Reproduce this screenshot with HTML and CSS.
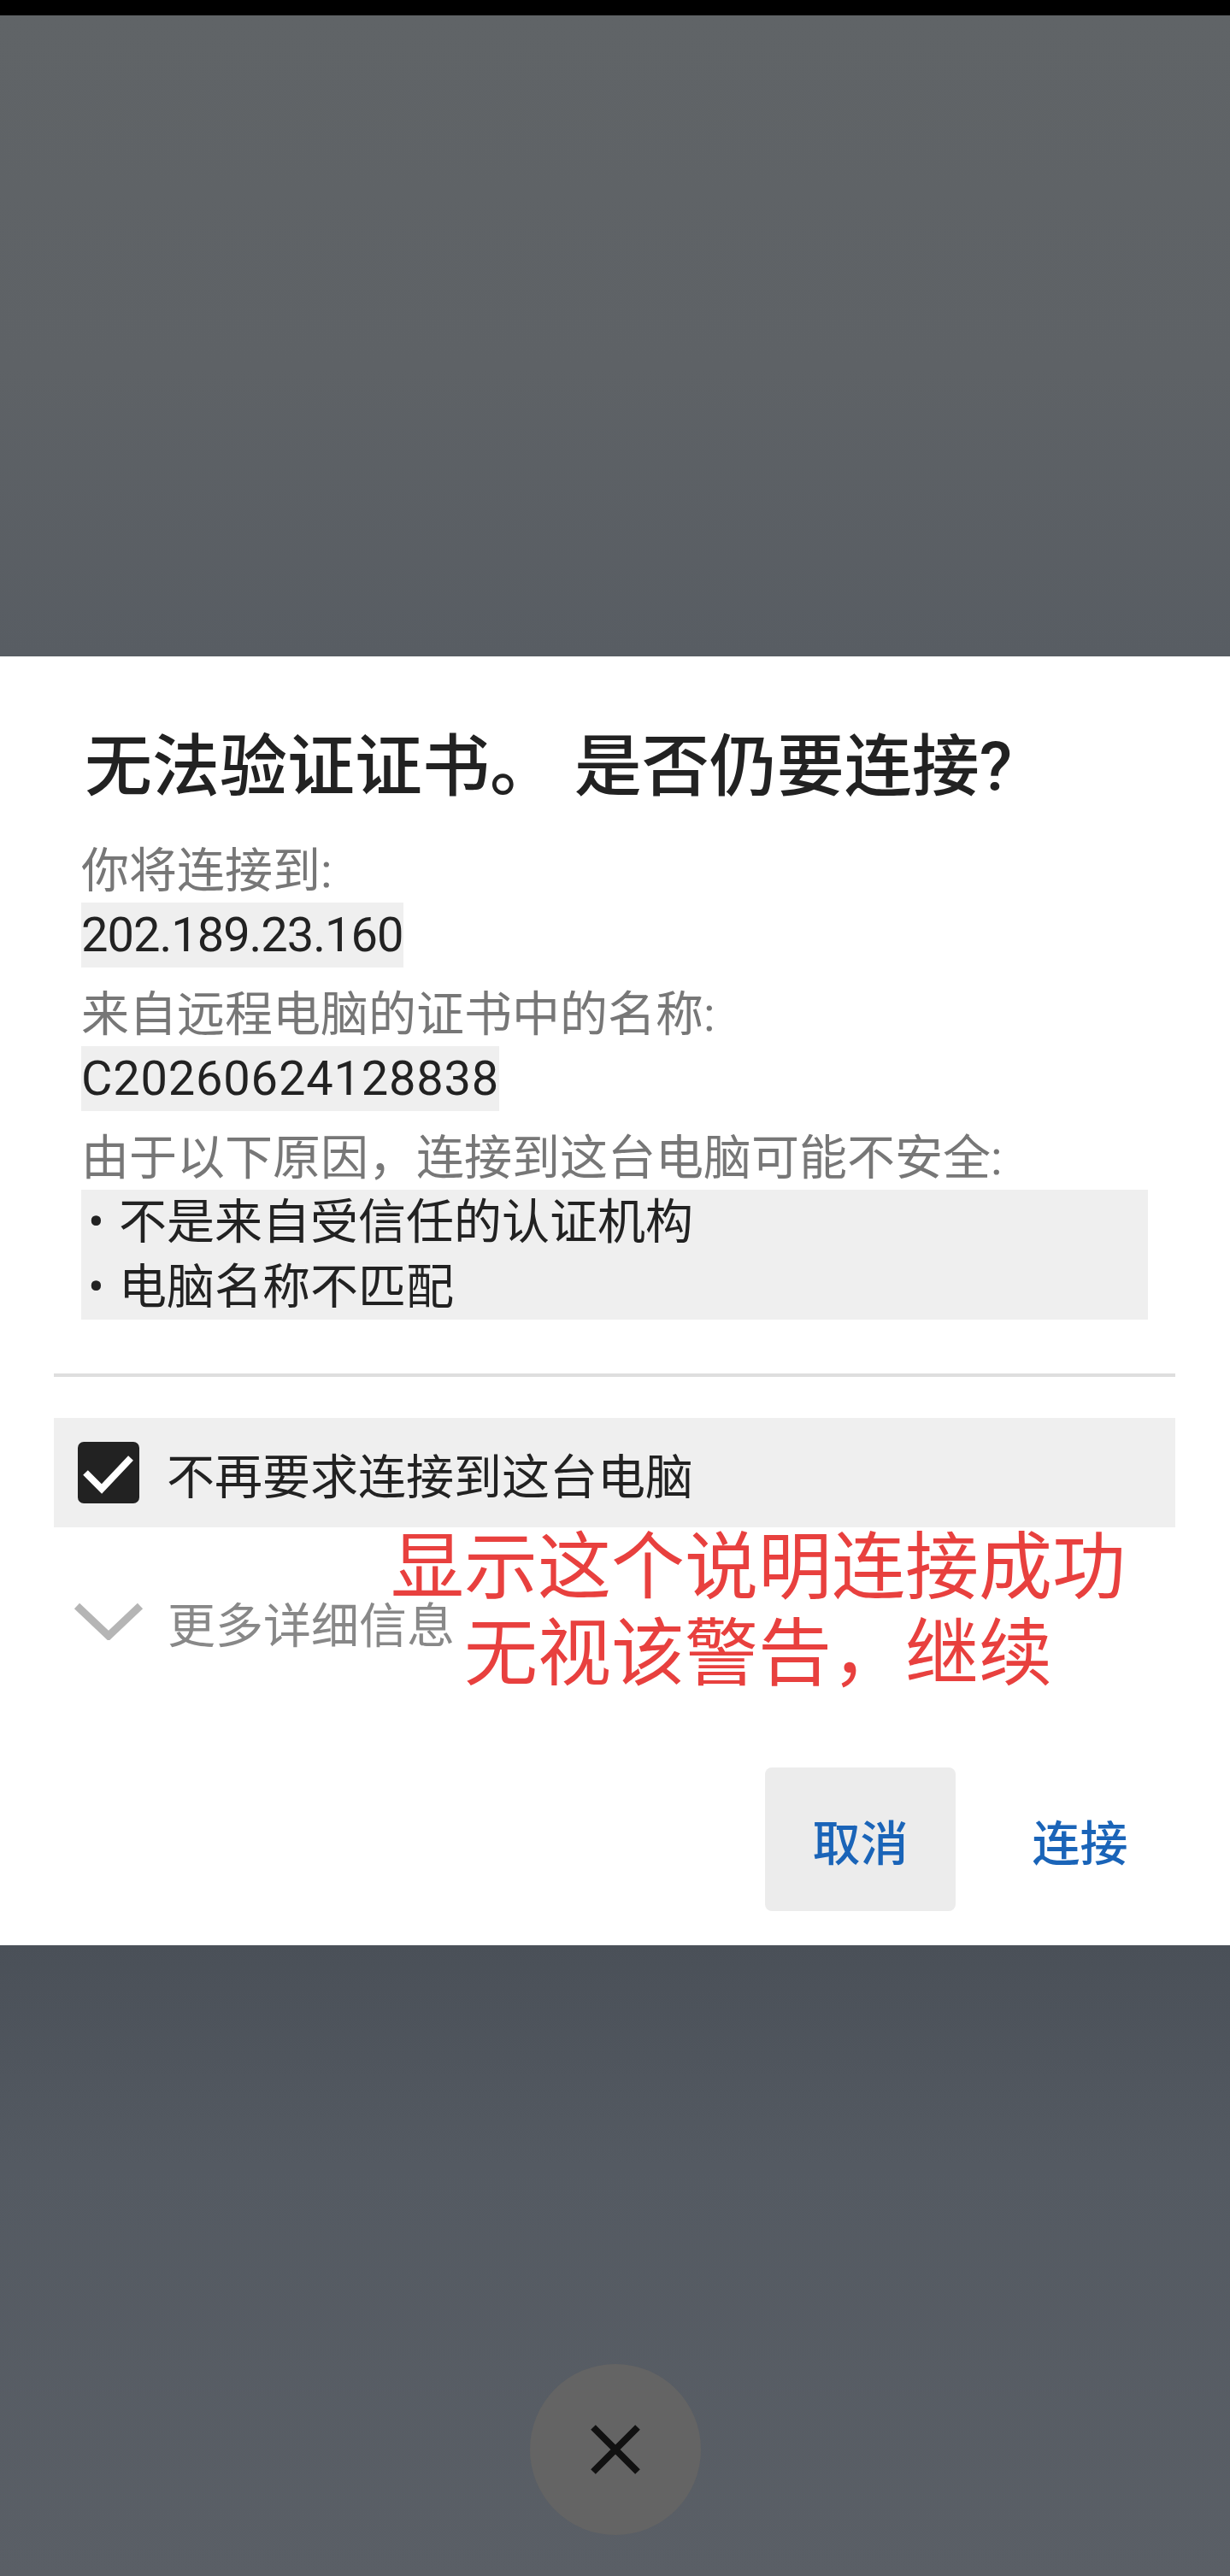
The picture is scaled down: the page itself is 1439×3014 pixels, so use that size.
FILE: index.html
```html
<!DOCTYPE html>
<html lang="zh-CN">
<head>
    <meta charset="UTF-8">
    <meta name="viewport" content="width=device-width, initial-scale=1.0">
    <title>证书警告</title>
    <link rel="stylesheet" href="styles.css">
</head>
<body>

    <div class="status-bar"></div>
    <div class="backdrop-top"></div>

    <div class="dialog">
        <h1 class="dialog-title">无法验证证书。 是否仍要连接?</h1>

        <div class="info">
            <p class="label">你将连接到:</p>
            <p class="value"><span class="hl ip">202.189.23.160</span></p>
            <p class="label">来自远程电脑的证书中的名称:</p>
            <p class="value"><span class="hl cert">C20260624128838</span></p>
            <p class="label">由于以下原因，连接到这台电脑可能不安全:</p>
            <ul class="reasons">
                <li>不是来自受信任的认证机构</li>
                <li>电脑名称不匹配</li>
            </ul>
        </div>

        <div class="divider"></div>

        <label class="remember">
            <span class="checkbox">
                <svg width="72" height="72" viewBox="0 0 72 72">
                    <polyline points="9,36 28,55 62,19" fill="none" stroke="#fff" stroke-width="8"/>
                </svg>
            </span>
            不再要求连接到这台电脑
        </label>

        <div class="more">
            <svg class="chevron" width="82" height="44" viewBox="0 0 82 44">
                <polyline points="4,4 41,39 78,4" fill="none" stroke="#b5b5b5" stroke-width="9"/>
            </svg>
            更多详细信息
        </div>

        <!-- 截图上的红色标注 -->
        <div class="note">显示这个说明连接成功<br>无视该警告，继续</div>

        <div class="actions">
            <button class="btn btn-cancel">取消</button>
            <button class="btn">连接</button>
        </div>
    </div>

    <div class="backdrop-bottom">
        <button class="close-btn">
            <svg width="60" height="60" viewBox="0 0 60 60">
                <path d="M4 4 L56 56 M56 4 L4 56" stroke="#111" stroke-width="8"/>
            </svg>
        </button>
    </div>

</body>
</html>
```

FILE: styles.css
```css
body {
    margin: 0;
    padding: 0;
    width: 1439px;
    height: 3014px;
    display: flex;
    flex-direction: column;
    font-family: Roboto, "Noto Sans CJK SC", sans-serif;
    background: #555a60;
    overflow: hidden;
}

.status-bar {
    height: 18px;
    background: #000;
}

.backdrop-top {
    height: 750px;
    background: linear-gradient(to bottom, #606467 0%, #5e6266 55%, #585d63 100%);
}

.dialog {
    position: relative;
    background: #fff;
    padding: 85px 64px 40px 63px;
}

.dialog-title {
    margin: 0 0 0 36px;
    font-size: 79px;
    line-height: 91px;
    font-weight: 500;
    color: #222;
}

.info {
    padding: 38px 32px 0 32px;
}

.label {
    margin: 18px 0 0 0;
    font-size: 56px;
    line-height: 74px;
    color: #777;
}

.label:first-child {
    margin-top: 0;
}

.value {
    margin: 0;
    font-size: 56px;
    line-height: 76px;
    color: #222;
}

.hl {
    display: inline-block;
    background: #efefef;
}

.ip {
    letter-spacing: -1px;
}

.cert {
    letter-spacing: 0.8px;
}

.reasons {
    list-style: none;
    margin: 0;
    padding: 0 0 0 8px;
    background: #efefef;
    font-size: 56px;
    line-height: 76px;
    color: #222;
}

.reasons li::before {
    content: "•";
    display: inline-block;
    width: 36px;
}

.divider {
    height: 4px;
    background: #dedede;
    margin-top: 63px;
}

.remember {
    display: flex;
    align-items: center;
    gap: 32px;
    height: 128px;
    margin-top: 48px;
    padding-left: 28px;
    background: #efefef;
    font-size: 56px;
    color: #222;
}

.checkbox {
    width: 72px;
    height: 72px;
    border-radius: 7px;
    background: #222;
    display: flex;
}

.more {
    display: flex;
    align-items: center;
    gap: 28px;
    height: 100px;
    margin-top: 60px;
    margin-bottom: 5px;
    padding-left: 23px;
    font-size: 56px;
    color: #888;
}

.note {
    position: absolute;
    top: 1016px;
    left: 387px;
    width: 1000px;
    text-align: center;
    font-size: 86px;
    line-height: 101px;
    color: #e8403e;
}

.actions {
    display: flex;
    justify-content: flex-end;
    gap: 34px;
    margin-top: 121px;
}

.btn {
    width: 223px;
    height: 168px;
    border: none;
    border-radius: 8px;
    background: none;
    font-family: inherit;
    font-size: 56px;
    font-weight: 500;
    color: #1a64b8;
    padding: 0;
}

.btn-cancel {
    background: #ececec;
}

.backdrop-bottom {
    flex: 1;
    display: flex;
    align-items: flex-end;
    justify-content: center;
    padding-bottom: 48px;
    background: linear-gradient(to bottom, #4a5058 0%, #545a62 35%, #5a5f66 100%);
}

.close-btn {
    width: 200px;
    height: 200px;
    border: none;
    border-radius: 50%;
    background: #646464;
    display: flex;
    align-items: center;
    justify-content: center;
    padding: 0;
}
```
